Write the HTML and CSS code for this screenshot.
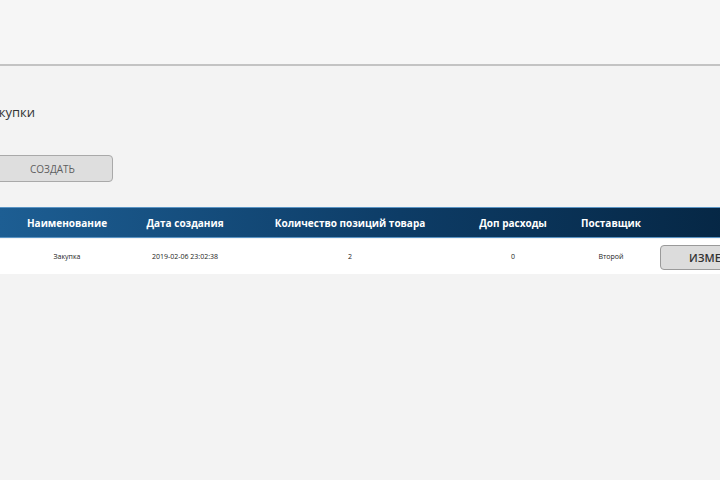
FILE: index.html
```html
<!doctype html>
<html>
  <head>
    <meta charset="utf-8">
    <title>Закупки</title>
    <link rel="stylesheet" href="styles.css">
  </head>
  <body>
    <div class='topbar'></div>
    <div class='page'>
      <h1 class='title'>Закупки</h1>
      <button class='create-button'>СОЗДАТЬ</button>
      <div class='table'>
        <div class='table-head'>
          <div>Наименование</div>
          <div>Дата создания</div>
          <div>Количество позиций товара</div>
          <div>Доп расходы</div>
          <div>Поставщик</div>
          <div></div>
        </div>
        <div class='table-row'>
          <div>Закупка</div>
          <div>2019-02-06 23:02:38</div>
          <div>2</div>
          <div>0</div>
          <div>Второй</div>
          <div class='cell-action'><button class='edit-button'>ИЗМЕНИТЬ</button></div>
        </div>
      </div>
    </div>
  </body>
</html>
```
FILE: styles.css
```css
body {
  margin: 0;
  background: #f3f3f3;
  font-family: "Open Sans", "Noto Sans", sans-serif;
  overflow: hidden;
  width: 720px;
  height: 480px;
}
/* top strip */
.topbar {
  height: 64px;
  background: #f6f6f6;
  border-bottom: 2px solid #c3c3c3;
}

.page {
  padding-top: 36px;
}

.title {
  margin: 0 0 0 -16px;
  font-size: 13px;
  font-weight: normal;
  color: #333;
  line-height: 20px;
}

.create-button {
  display: block;
  margin: 33px 0 0 -8px;
  width: 121px;
  height: 27px;
  background: #dedede;
  border: 1px solid #a9a9a9;
  border-radius: 4px;
  font-family: inherit;
  font-size: 10px;
  color: #5f5f5f;
  padding: 0;
}
/* table */
.table {
  margin-top: 25px;
  width: 800px;
}

.table-head,
.table-row {
  display: grid;
  grid-template-columns: 134px 102px 228px 98px 98px 1fr;
  align-items: center;
  text-align: center;
}

.table-head {
  height: 29px;
  background: linear-gradient(to right, #1d5e93, #0d3c66 50%, #04223d);
  border-top: 1px solid #5a94c4;
  border-bottom: 1px solid #5a94c4;
  color: #fff;
  font-size: 10px;
  font-weight: bold;
}

.table-row {
  margin-top: 1px;
  height: 35px;
  background: #fff;
  font-size: 7px;
  color: #222;
}

.cell-action {
  text-align: left;
}

.edit-button {
  width: 120px;
  height: 25px;
  margin-top: 1px;
  background: #dcdcdc;
  border: 1px solid #9a9a9a;
  border-radius: 4px;
  font-family: inherit;
  font-size: 11px;
  font-weight: 600;
  color: #333;
  padding: 0;
}
```
